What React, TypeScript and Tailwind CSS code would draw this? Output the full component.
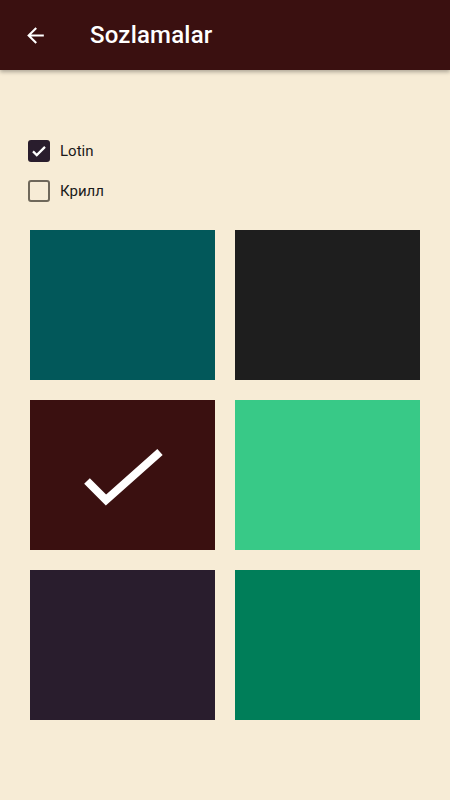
import { useState } from 'react';

const colors = ['#02585a', '#1e1e1e', '#3a1010', '#38c987', '#291d2d', '#007e59'];

function Check({ checked }: { checked: boolean }) {
  return checked ? (
    <span className="w-[22px] h-[22px] rounded-[3px] bg-[#291d2d] flex items-center justify-center">
      <svg width="18" height="18" viewBox="0 0 24 24" fill="none" stroke="#fff" strokeWidth="3">
        <path d="M4 12.5l5 5L20 6.5" />
      </svg>
    </span>
  ) : (
    <span className="w-[22px] h-[22px] rounded-[3px] border-2 border-[#6f685b]" />
  );
}

export default function App() {
  const [script, setScript] = useState<'lotin' | 'krill'>('lotin');
  const [selected, setSelected] = useState(2);

  return (
    <div className="w-[450px] h-[800px] bg-[#f7ecd6] font-['Roboto',sans-serif]">
      {/* App bar */}
      <div className="h-[70px] bg-[#3a1010] flex items-center shadow-[0_2px_4px_rgba(0,0,0,0.3)]">
        <button className="w-[70px] h-full flex items-center justify-center">
          <svg width="25" height="25" viewBox="0 0 24 24" fill="#fff">
            <path d="M20 11H7.83l5.59-5.59L12 4l-8 8 8 8 1.41-1.41L7.83 13H20v-2z" />
          </svg>
        </button>
        <h1 className="ml-[20px] text-white text-[24px] font-medium tracking-[0.2px]">Sozlamalar</h1>
      </div>

      {/* Script options */}
      <div className="pt-[69px] pl-[28px] flex flex-col gap-[16px]">
        <label className="flex items-center gap-[10px] h-[24px]" onClick={() => setScript('lotin')}>
          <Check checked={script === 'lotin'} />
          <span className="text-[15px] text-[#1a1a1a]">Lotin</span>
        </label>
        <label className="flex items-center gap-[10px] h-[24px]" onClick={() => setScript('krill')}>
          <Check checked={script === 'krill'} />
          <span className="text-[15px] text-[#1a1a1a]">Крилл</span>
        </label>
      </div>

      {/* Theme colours */}
      <div className="mt-[27px] px-[30px] grid grid-cols-2 gap-[20px]">
        {colors.map((c, i) => (
          <button
            key={c}
            onClick={() => setSelected(i)}
            className="h-[150px] block"
            style={{ backgroundColor: c }}
          >
            {selected === i && (
              <svg className="w-full h-full" viewBox="0 0 185 150" fill="none" stroke="#fff" strokeWidth="8">
                <path d="M57 81L76 100L130 52" />
              </svg>
            )}
          </button>
        ))}
      </div>
    </div>
  );
}
